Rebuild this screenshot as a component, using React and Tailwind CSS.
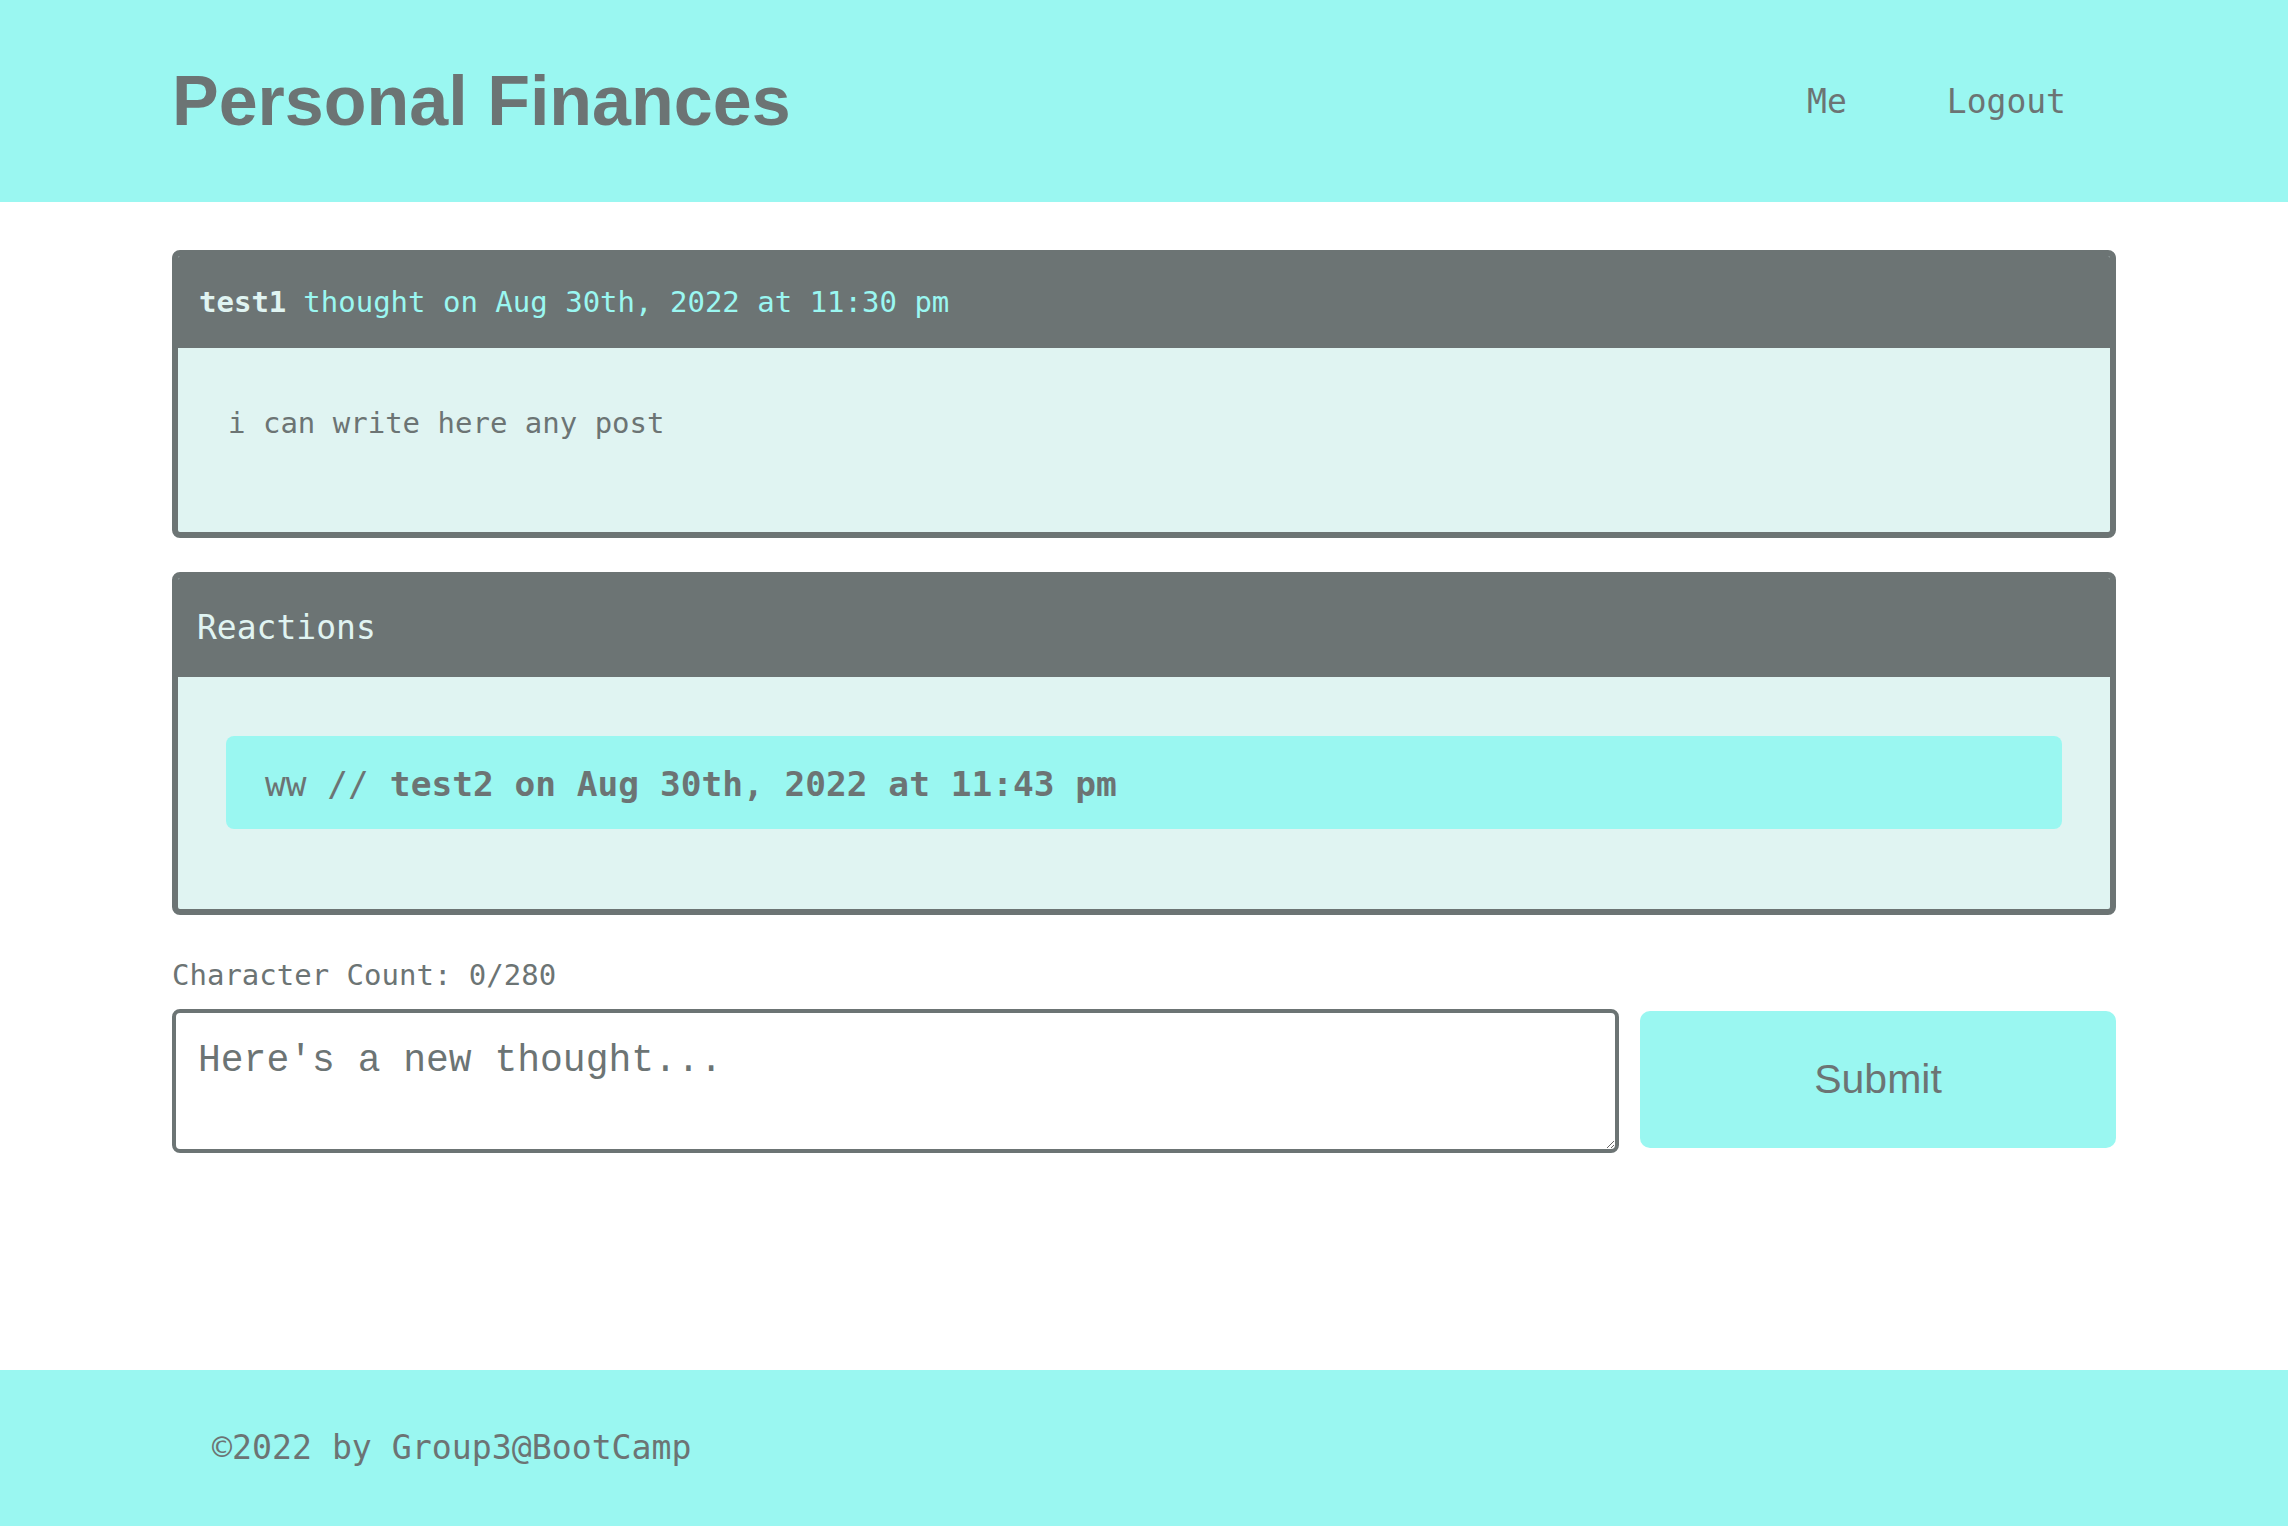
import { useState } from "react";

const mono = "font-['DejaVu_Sans_Mono',Menlo,monospace]";

function ThoughtCard() {
  return (
    <div className="rounded-lg border-[6px] border-[#6c7474] bg-[#e0f4f2] overflow-hidden">
      <div className="bg-[#6c7474] h-[92px] flex items-center px-[21px] pt-[2px] text-[29px]">
        <span className="font-bold text-[#e0f4f2]">test1</span>
        <span className="ml-[17px] text-[#9af7f1]">thought on Aug 30th, 2022 at 11:30 pm</span>
      </div>
      <div className="px-[50px] pt-[53px] pb-[87px] text-[29px] leading-[44px] text-[#6c7474]">
        <p>i can write here any post</p>
      </div>
    </div>
  );
}

function ReactionsCard() {
  return (
    <div className="rounded-lg border-[6px] border-[#6c7474] bg-[#e0f4f2] overflow-hidden">
      <div className="bg-[#6c7474] h-[99px] flex items-center px-[19px] text-[33px] text-[#e0f4f2]">
        Reactions
      </div>
      <div className="px-[48px] pt-[59px] pb-[80px]">
        <div className="bg-[#9af7f1] rounded-lg h-[93px] flex items-center px-[39px] pt-[5px] text-[34.5px] text-[#6c7474]">
          <span>ww //</span>
          <span className="ml-[21px] font-bold">test2 on Aug 30th, 2022 at 11:43 pm</span>
        </div>
      </div>
    </div>
  );
}

export default function App() {
  const [text, setText] = useState("");

  return (
    <div className={`min-h-screen flex flex-col bg-white ${mono}`}>
      {/* Header */}
      <header className="bg-[#9af7f1] h-[202px] flex items-center">
        <div className="w-[1944px] mx-auto flex items-center justify-between">
          <h1 className="font-['Liberation_Sans',Arial,sans-serif] font-bold text-[70px] text-[#6c7474] leading-none">
            Personal Finances
          </h1>
          <nav className="flex pt-[2px] text-[33px] text-[#6c7474]">
            <a className="px-[50px]">Me</a>
            <a className="px-[50px]">Logout</a>
          </nav>
        </div>
      </header>

      {/* Main */}
      <main className="flex-1 w-[1944px] mx-auto pt-[48px]">
        <div className="flex flex-col gap-[34px]">
          <ThoughtCard />
          <ReactionsCard />
        </div>

        <p className="mt-[40px] text-[29px] leading-[40px] text-[#6c7474]">
          Character Count: {text.length}/280
        </p>

        <div className="mt-[14px] flex gap-[21px] items-start">
          <textarea
            value={text}
            onChange={(e) => setText(e.target.value)}
            placeholder="Here's a new thought..."
            className="flex-1 h-[144px] rounded-lg border-4 border-[#6c7474] bg-white px-[22px] pt-[19px] pb-[24px] font-['Liberation_Mono','Courier_New',monospace] text-[38px] text-[#6c7474] placeholder-[#6c7474] outline-none"
          />
          <button className="w-[476px] h-[137px] mt-[2px] rounded-[10px] bg-[#9af7f1] font-['Liberation_Sans',Arial,sans-serif] text-[41px] text-[#6c7474]">
            Submit
          </button>
        </div>
      </main>

      {/* Footer */}
      <footer className="bg-[#9af7f1] h-[156px] flex items-center">
        <div className="w-[1944px] mx-auto px-[40px] text-[33.2px] text-[#6c7474]">
          ©2022 by Group3@BootCamp
        </div>
      </footer>
    </div>
  );
}
